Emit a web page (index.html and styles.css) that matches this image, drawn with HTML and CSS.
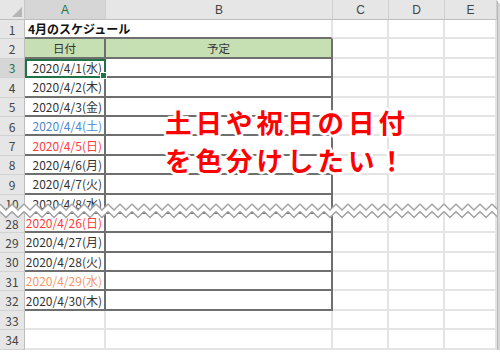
FILE: index.html
```html
<!DOCTYPE html>
<html lang="ja">
<head>
<meta charset="utf-8">
<title>4月のスケジュール</title>
<link rel="stylesheet" href="styles.css">
</head>
<body>
<div class="sheet">
  <div class="row hdr">
    <div class="corner"><svg class="tri" width="10" height="10" viewBox="0 0 10 10"><path d="M10 0 L10 10 L0 10 Z" fill="#b5b5b5"/></svg></div>
    <div class="ch ch-sel">A</div>
    <div class="ch">B</div>
    <div class="ch">C</div>
    <div class="ch">D</div>
    <div class="ch">E</div>
  </div>
  <div class="row">
    <div class="rh">1</div>
    <div class="c top title-cell"><span class="title">4月のスケジュール</span></div>
    <div class="c top"></div>
    <div class="c"></div><div class="c"></div><div class="c"></div>
  </div>
  <div class="row">
    <div class="rh">2</div>
    <div class="c t head">日付</div>
    <div class="c t head">予定</div>
    <div class="c"></div><div class="c"></div><div class="c"></div>
  </div>
  <div class="row">
    <div class="rh rh-sel">3</div>
    <div class="c t d sel">2020/4/1(水)</div>
    <div class="c t"></div>
    <div class="c"></div><div class="c"></div><div class="c"></div>
  </div>
  <div class="row">
    <div class="rh">4</div>
    <div class="c t d">2020/4/2(木)</div>
    <div class="c t"></div>
    <div class="c"></div><div class="c"></div><div class="c"></div>
  </div>
  <div class="row">
    <div class="rh">5</div>
    <div class="c t d">2020/4/3(金)</div>
    <div class="c t"></div>
    <div class="c"></div><div class="c"></div><div class="c"></div>
  </div>
  <div class="row">
    <div class="rh">6</div>
    <div class="c t d sat">2020/4/4(土)</div>
    <div class="c t"></div>
    <div class="c"></div><div class="c"></div><div class="c"></div>
  </div>
  <div class="row">
    <div class="rh">7</div>
    <div class="c t d sun">2020/4/5(日)</div>
    <div class="c t"></div>
    <div class="c"></div><div class="c"></div><div class="c"></div>
  </div>
  <div class="row">
    <div class="rh">8</div>
    <div class="c t d">2020/4/6(月)</div>
    <div class="c t"></div>
    <div class="c"></div><div class="c"></div><div class="c"></div>
  </div>
  <div class="row">
    <div class="rh">9</div>
    <div class="c t d">2020/4/7(火)</div>
    <div class="c t"></div>
    <div class="c"></div><div class="c"></div><div class="c"></div>
  </div>
  <div class="row">
    <div class="rh">10</div>
    <div class="c t d">2020/4/8(水)</div>
    <div class="c t"></div>
    <div class="c"></div><div class="c"></div><div class="c"></div>
  </div>
  <div class="row">
    <div class="rh">28</div>
    <div class="c t d sun">2020/4/26(日)</div>
    <div class="c t"></div>
    <div class="c"></div><div class="c"></div><div class="c"></div>
  </div>
  <div class="row">
    <div class="rh">29</div>
    <div class="c t d">2020/4/27(月)</div>
    <div class="c t"></div>
    <div class="c"></div><div class="c"></div><div class="c"></div>
  </div>
  <div class="row">
    <div class="rh">30</div>
    <div class="c t d">2020/4/28(火)</div>
    <div class="c t"></div>
    <div class="c"></div><div class="c"></div><div class="c"></div>
  </div>
  <div class="row">
    <div class="rh">31</div>
    <div class="c t d hol">2020/4/29(水)</div>
    <div class="c t"></div>
    <div class="c"></div><div class="c"></div><div class="c"></div>
  </div>
  <div class="row">
    <div class="rh">32</div>
    <div class="c t d">2020/4/30(木)</div>
    <div class="c t"></div>
    <div class="c"></div><div class="c"></div><div class="c"></div>
  </div>
  <div class="row">
    <div class="rh">33</div>
    <div class="c"></div><div class="c"></div>
    <div class="c"></div><div class="c"></div><div class="c"></div>
  </div>
  <div class="row">
    <div class="rh">34</div>
    <div class="c"></div><div class="c"></div>
    <div class="c"></div><div class="c"></div><div class="c"></div>
  </div>

  <svg class="tear" width="497" height="20" viewBox="0 0 497 20">
    <defs>
      <pattern id="zz" x="0" y="0" width="12" height="20" patternUnits="userSpaceOnUse">
        <path d="M0 3 L6 9 L12 3 L12 10.5 L6 16.5 L0 10.5 Z" fill="#fff"/>
        <path d="M0 3 L6 9 L12 3" fill="none" stroke="#a0a0a0" stroke-width="1.4"/>
        <path d="M0 10.5 L6 16.5 L12 10.5" fill="none" stroke="#a0a0a0" stroke-width="1.4"/>
      </pattern>
    </defs>
    <rect x="0" y="0" width="497" height="20" fill="url(#zz)"/>
  </svg>

  <div class="callout">
    <div>土日や祝日の日付</div>
    <div>を色分けしたい！</div>
  </div>
</div>
</body>
</html>
```

FILE: styles.css
```css
* { box-sizing: border-box; }
html, body { margin: 0; padding: 0; background: #fff; }
body {
  font-family: "Noto Sans CJK JP", "Noto Sans", sans-serif;
  color: #333;
  font-size: 12px;
}
.sheet {
  position: relative;
  width: 497px;
  height: 350px;
  overflow: hidden;
  background: #fff;
  box-shadow: 1px 1px 0 #b8b8b8, 3px 3px 1px #d6d6d6;
}
.row {
  display: grid;
  grid-template-columns: 25px 81px 227px 56px 56px 52px;
  height: 19.4px;
}
.row.hdr { height: 20px; }
.corner {
  position: relative;
  background: #e6e6e6;
  border-right: 1px solid #c9c9c9;
  border-bottom: 1px solid #bdbdbd;
}
.tri { position: absolute; right: 2px; bottom: 2px; }
.ch {
  background: #e6e6e6;
  border-right: 1px solid #cfcfcf;
  border-bottom: 1px solid #bdbdbd;
  display: flex;
  align-items: center;
  justify-content: center;
  font-family: "Liberation Sans", "Noto Sans", sans-serif;
  font-size: 12px;
  color: #444;
}
.ch-sel { background: #d6d6d6; color: #217346; }
.rh {
  background: #e6e6e6;
  border-right: 1px solid #bdbdbd;
  border-bottom: 1px solid #d2d2d2;
  display: flex;
  align-items: center;
  justify-content: center;
  font-size: 12px;
  color: #444;
}
.rh-sel { background: #d6d6d6; color: #217346; }
.c {
  border-right: 2px solid #e4e4e4;
  border-bottom: 2px solid #e4e4e4;
  display: flex;
  align-items: center;
  min-width: 0;
}
.c.top { border-bottom-color: #6f6f6f; }
.title-cell { border-right: none; overflow: visible; position: relative; }
.title {
  white-space: nowrap;
  font-weight: bold;
  color: #111;
  padding-left: 3px;
  font-size: 12px;
}
.c.t {
  border-right-color: #6f6f6f;
  border-bottom-color: #6f6f6f;
}
.head {
  background: #c6e0b4;
  justify-content: center;
  font-size: 11.5px;
  color: #333;
}
.d {
  justify-content: flex-end;
  padding-right: 2px;
  white-space: nowrap;
  color: #333;
}
.sat { color: #4a8ad0; }
.sun { color: #ff3b3b; }
.hol { color: #f5986a; }
.sel {
  position: relative;
  outline: 2px solid #217346;
  outline-offset: -2px;
}
.sel::after {
  content: "";
  position: absolute;
  right: -3px;
  bottom: -3px;
  width: 5px;
  height: 5px;
  background: #217346;
  border: 1px solid #fff;
}
.tear {
  position: absolute;
  left: 0;
  top: 201px;
}
.callout {
  position: absolute;
  left: 165px;
  top: 103px;
  font-family: "Noto Sans CJK JP", sans-serif;
  font-weight: 700;
  font-size: 26.5px;
  line-height: 38px;
  letter-spacing: 4px;
  color: #ff0000;
  white-space: nowrap;
  text-shadow:
    2px 0 0 #fff, -2px 0 0 #fff, 0 2px 0 #fff, 0 -2px 0 #fff,
    2px 2px 0 #fff, -2px -2px 0 #fff, 2px -2px 0 #fff, -2px 2px 0 #fff,
    3px 0 1px #fff, -3px 0 1px #fff, 0 3px 1px #fff, 0 -3px 1px #fff;
}
```
